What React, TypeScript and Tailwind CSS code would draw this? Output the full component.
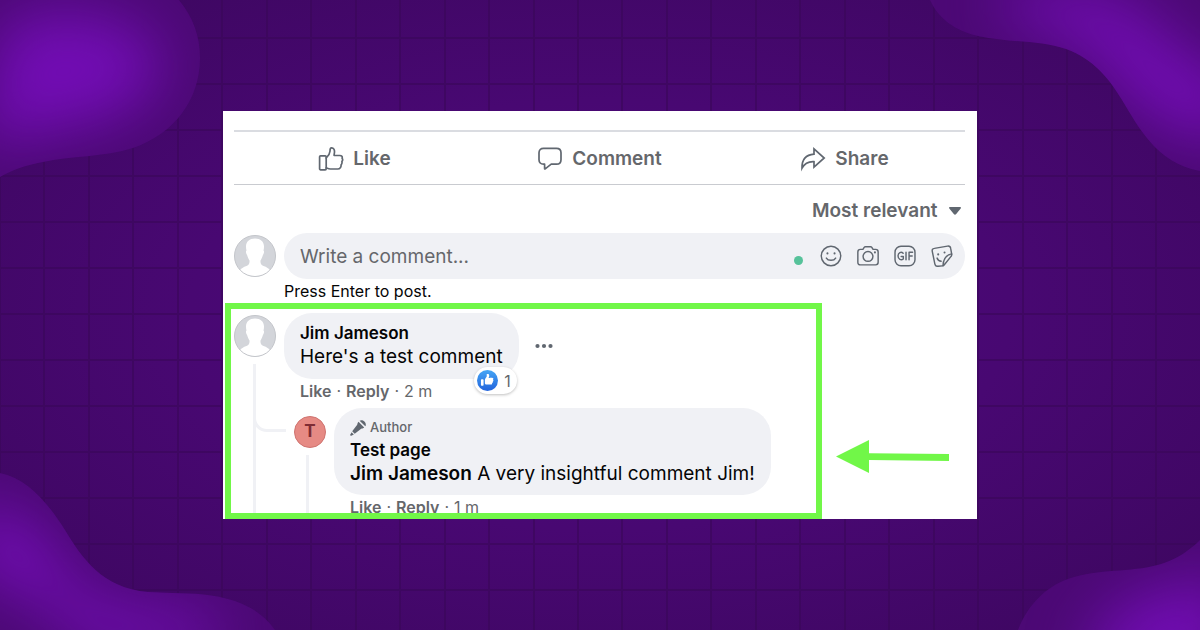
import type { ReactNode } from "react";

function Backdrop() {
  const columns = Array.from({ length: 27 }, (_, i) => Math.round(i * 44.46));
  const rows = Array.from({ length: 13 }, (_, i) => 38 + i * 46);
  const blobs = [
    "M179 0C193 17 200 36 200 58C200 100 174 134 133 148C105 157 70 156 43 162C26 165 12 170 0 177V0Z",
    "M930 0C938 18 955 31 978 36C1010 43 1040 40 1066 49C1094 59 1110 80 1122 100C1138 126 1156 163 1200 171V0Z",
    "M0 473C28 479 48 503 65 530C82 558 102 588 148 592C180 594 205 591 235 601C252 607 265 616 275 630H0Z",
    "M1018 630C1028 604 1048 584 1074 577C1105 568 1135 573 1164 563C1178 558 1190 550 1200 540V630Z",
  ];
  return (
    <svg
      aria-hidden="true"
      className="absolute inset-0 h-full w-full"
      viewBox="0 0 1200 630"
      preserveAspectRatio="none"
    >
      <defs>
        <radialGradient id="base" cx="0.5" cy="0.5" r="0.62">
          <stop offset="0" stopColor="#4e0880" />
          <stop offset="0.55" stopColor="#480872" />
          <stop offset="1" stopColor="#3f0763" />
        </radialGradient>
        <filter id="soft" x="-50%" y="-50%" width="200%" height="200%" colorInterpolationFilters="sRGB">
          <feGaussianBlur stdDeviation="30" />
        </filter>
        <clipPath id="blobs">
          {blobs.map((d) => (
            <path key={d} d={d} />
          ))}
        </clipPath>
      </defs>
      <rect width="1200" height="630" fill="url(#base)" />
      <g stroke="#3a0759" strokeWidth="2" opacity="0.6">
        {columns.map((x) => (
          <path key={x} d={`M${x} 0V630`} />
        ))}
        {rows.map((y) => (
          <path key={y} d={`M0 ${y}H1200`} />
        ))}
      </g>
      <g clipPath="url(#blobs)">
        <rect width="1200" height="630" fill="#4c0975" />
        <g filter="url(#soft)" fill="#720db4">
          <path d="M0 28C40 0 140 10 160 55C175 100 100 128 40 132L-20 150Z" />
          <path d="M1000 -10L1100 -10L1150 20L1190 60L1240 80V140C1170 140 1140 110 1114 80C1095 40 1050 34 1000 14Z" />
          <path d="M-30 500C30 510 60 550 78 590C115 610 170 606 220 620V650H90L40 600L-30 570Z" />
          <path d="M1090 660C1100 595 1150 595 1230 575V680H1090Z" />
        </g>
      </g>
    </svg>
  );
}

function Avatar() {
  return (
    <svg viewBox="0 0 42 42" className="size-[42px] shrink-0" role="img" aria-label="Profile picture">
      <circle cx="21" cy="21" r="20.5" fill="#d3d5da" />
      <path
        d="M21 3.5C15.500 3.500 12 6.500 12 11.500C12 13 12.200 14.500 12.500 15.500C11.600 15.700 11.900 18.500 13 19.800C13.500 22 14.500 24 15.500 25.500C15.700 28.500 15 30 12.500 31C9.500 32 7 33.500 5.800 35.500C9.500 39.500 15.500 41.200 21 41.200C26.500 41.200 32.500 39.500 36.200 35.500C35 33.500 32.500 32 29.500 31C27 30 26.300 28.500 26.500 25.500C27.500 24 28.500 22 29 19.800C30.100 18.500 30.400 15.700 29.500 15.500C29.800 14.500 30 13 30 11.500C30 6.500 26.500 3.500 21 3.500Z"
        fill="#fff"
      />
      <circle cx="21" cy="21" r="20.5" fill="none" stroke="#c3c5ca" />
    </svg>
  );
}

function LineIcon({ children, className = "size-[26px]" }: { children: ReactNode; className?: string }) {
  return (
    <svg
      viewBox="0 0 26 26"
      className={className}
      fill="none"
      stroke="#606770"
      strokeWidth="1.7"
      strokeLinejoin="round"
      strokeLinecap="round"
      aria-hidden="true"
    >
      {children}
    </svg>
  );
}

const actions = [
  {
    label: "Like",
    icon: (
      <>
        <rect x="1.600" y="9.800" width="6.600" height="14" rx="1" />
        <path d="M8.200 12C9.800 10.500 11.800 8 12 5.200C12 3.800 11.900 2 13.500 1.900C15.800 1.800 16.600 4 16.500 6C16.400 7.500 16 8.700 16.100 9.500H21.800C23.800 9.500 24.600 10.700 24.100 12.200C24.800 13.200 24.700 14.600 23.900 15.500C24.200 16.800 24 18 23.100 18.900C23.200 21.200 22 23 19.800 23H12.500C10.800 23 9.500 22.400 8.200 21.900" />
      </>
    ),
  },
  {
    label: "Comment",
    icon: (
      <path d="M6.500 2.300H19.500C22.300 2.300 24 4 24 6.800V13.700C24 16.500 22.300 18.200 19.500 18.200H14.200L8.200 22.800C7.800 23.100 7.600 22.900 7.600 22.500V18.200H6.500C3.700 18.200 2 16.500 2 13.700V6.800C2 4 3.700 2.300 6.500 2.300Z" />
    ),
  },
  {
    label: "Share",
    icon: (
      <path
        strokeLinejoin="miter"
        d="M14 2.800L24.200 12L14 21.200V15.700C8.800 15.400 4.800 17 2 22.200C1.800 14.500 5.500 8.800 14 8.200Z"
      />
    ),
  },
];

const composerTools = [
  {
    label: "Insert an emoji",
    icon: (
      <>
        <circle cx="13" cy="13" r="11.500" />
        <path d="M7.500 15.500C9.500 19 16.500 19 18.500 15.500" />
        <path d="M8.800 9.800V10M17.200 9.800V10" strokeWidth="2.400" />
      </>
    ),
  },
  {
    label: "Attach a photo",
    icon: (
      <>
        <path d="M4 5.200H7L8.500 2.800C8.800 2.300 9.300 2 10 2H16C16.700 2 17.200 2.300 17.500 2.800L19 5.200H22C24 5.200 25 6.200 25 8.200V20.500C25 22.500 24 23.500 22 23.500H4C2 23.500 1 22.500 1 20.500V8.200C1 6.200 2 5.200 4 5.200Z" />
        <circle cx="13" cy="13.500" r="5.800" />
        <path d="M21.200 8.700V8.800" strokeWidth="2.400" />
      </>
    ),
  },
  {
    label: "Comment with a GIF",
    icon: (
      <>
        <rect x="1.200" y="1.500" width="23.600" height="23" rx="7" />
        <path d="M10.800 9.800C8.500 7.500 4.800 9 4.800 13C4.800 17 8.500 18.500 11 16.500V13.500H8.500M14.200 8.500V17.500M17.800 17.500V8.500H22M17.800 13H21.500" />
      </>
    ),
  },
  {
    label: "Comment with a sticker",
    icon: (
      <>
        <path d="M4 4L19.500 1.300C21.700 1 22.900 1.800 23.200 3.800L24.500 11C24.600 12 24.300 12.800 23.700 13.500L15.500 23.700C15 24.300 14.400 24.600 13.500 24.700L8 25.200C6 25.300 5 24.500 4.600 22.500L1.500 7.500C1.100 5.400 2 4.300 4 4Z" />
        <path d="M24.400 10.500C19.500 11.500 14.500 15 14.200 24.500" />
        <path d="M7.200 15.500C8.100 17.800 9.800 19 12 19.200" />
        <path d="M8.500 11V11.100M16 8.800V8.900" strokeWidth="2.400" />
      </>
    ),
  },
];

function CommentMeta({ age }: { age: string }) {
  return (
    <div className="flex h-6 items-center gap-[5px] px-4 text-base leading-6 text-[#65676b]">
      <button type="button" className="font-semibold">Like</button>
      <span>·</span>
      <button type="button" className="font-semibold">Reply</button>
      <span>·</span>
      <a href="#comment">{age}</a>
    </div>
  );
}

function ReactionBadge() {
  return (
    <button
      type="button"
      aria-label="1 like"
      className="absolute right-0.5 -bottom-[15px] flex h-[27px] items-center gap-1.5 rounded-full bg-white pr-1.5 pl-[3px] text-base text-[#65676b] shadow-[0_1px_3px_rgba(0,0,0,0.25)]"
    >
      <svg viewBox="0 0 16 16" className="size-[21px]" aria-hidden="true">
        <defs>
          <linearGradient id="thumb" x1="0" y1="0" x2="0" y2="1">
            <stop offset="0" stopColor="#45a5f5" />
            <stop offset="1" stopColor="#2264dc" />
          </linearGradient>
        </defs>
        <circle cx="8" cy="8" r="8" fill="url(#thumb)" />
        <path
          fill="#fff"
          d="M12.162 7.338c.176.123.338.245.338.674 0 .43-.229.604-.474.725.1.163.132.36.089.546-.077.344-.392.611-.672.690.121.194.159.385.015.620-.185.295-.346.407-1.058.407H7.500c-.988 0-1.500-.546-1.500-1V7.665c0-1.230 1.467-2.275 1.467-3.130L7.361 3.470c-.005-.065.008-.224.058-.270.080-.079.301-.200.635-.200.218 0 .363.041.534.123.581.277.732.978.732 1.542 0 .271-.414 1.083-.470 1.364 0 0 .867-.192 1.879-.199 1.061-.006 1.749.190 1.749.842 0 .261-.219.523-.316.666zM3.600 7h.800a.600.600 0 01.600.600v3.800a.600.600 0 01-.600.600h-.800a.600.600 0 01-.600-.600V7.600a.600.600 0 01.600-.600z"
        />
      </svg>
      1
    </button>
  );
}

function CommentThread() {
  return (
    <section
      aria-label="Comments"
      className="h-[216px] min-w-0 flex-1 overflow-hidden border-6 border-[#71f748] pt-1 pl-[3px]"
    >
      <article className="flex gap-2">
        <div className="flex shrink-0 flex-col gap-[7px] pt-0.5">
          <Avatar />
          <div className="ml-[19px] w-[3px] flex-1 bg-[#f0f1f5]" />
        </div>
        <div className="min-w-0 flex-1">
          <div className="flex items-center gap-4">
            <div className="relative rounded-[28px] bg-[#f0f1f5] px-4 pt-2 pb-2.5 leading-6">
              <h3 className="text-[17px] leading-6 font-semibold">Jim Jameson</h3>
              <p className="text-[19px] leading-6">Here&apos;s a test comment</p>
              <ReactionBadge />
            </div>
            <button type="button" aria-label="More options">
              <svg viewBox="0 0 18 6" className="h-1.5 w-[18px]" fill="#606770" aria-hidden="true">
                <circle cx="2.500" cy="3" r="2.100" />
                <circle cx="9" cy="3" r="2.100" />
                <circle cx="15.500" cy="3" r="2.100" />
              </svg>
            </button>
          </div>
          <CommentMeta age="2 m" />
          <article className="relative mt-[5px] flex gap-2 pl-2.5">
            <div className="absolute top-0 -left-[31px] h-6 w-[33px] rounded-bl-[14px] border-b-[3px] border-l-[3px] border-[#f0f1f5]" />
            <div className="flex w-8 shrink-0 flex-col gap-[7px] pt-2">
              <div className="flex size-8 items-center justify-center rounded-full border border-[#cf7470] bg-[#e68a84] text-[17px] font-bold text-[#7e2c34]">
                T
              </div>
              <div className="ml-3 w-[3px] flex-1 bg-[#f0f1f5]" />
            </div>
            <div>
              <div className="rounded-[28px] bg-[#f0f1f5] px-4 pt-2.5 pb-[9px]">
                <div className="flex h-5 items-center gap-1 text-[13px] font-medium text-[#65676b]">
                  <svg viewBox="0 0 16 16" className="size-4" fill="#606770" aria-hidden="true">
                    <path d="M9.600.8C10.800-.2 13 .1 14.400 1.500C15.900 3 16.200 5.100 15.300 6.300Z" />
                    <path d="M8.500 1.800L14.200 7.600C13.200 8.700 12 8.600 11.200 8.800L4.700 13.800L2.200 11.300L7.200 4.800C7.400 3.800 7.600 2.800 8.500 1.800Z" />
                    <path d="M1.600 12.200L3.800 14.400L1.300 15.800C.6 16.100-.1 15.400.2 14.700Z" />
                  </svg>
                  Author
                </div>
                <h3 className="text-[17px] leading-6 font-semibold">Test page</h3>
                <p className="text-[19px] leading-6">
                  <a href="#jim" className="font-semibold">Jim Jameson</a> A very insightful comment Jim!
                </p>
              </div>
              <CommentMeta age="1 m" />
            </div>
          </article>
        </div>
      </article>
    </section>
  );
}

export default function App() {
  return (
    <div className="relative flex min-h-screen items-center justify-center overflow-hidden bg-[#430769] font-['Inter','Liberation_Sans',sans-serif]">
      <Backdrop />
      <main className="relative w-full max-w-[754px] bg-white pt-[19px] text-[#050505]">
        <div className="mr-3 ml-[11px]">
          <div className="grid grid-cols-3 gap-1 border-t-2 border-b border-t-[#dadce1] border-b-[#c9cbd0]">
            {actions.map((action) => (
              <button
                key={action.label}
                type="button"
                className="flex h-[52px] items-center justify-center gap-[9px] pt-0.5 text-[19px] font-semibold text-[#65676b]"
              >
                <LineIcon>{action.icon}</LineIcon>
                {action.label}
              </button>
            ))}
          </div>

          <div className="relative flex h-12 items-center justify-end pt-1 pr-1">
            <select
              aria-label="Sort comments"
              className="appearance-none bg-transparent pr-[23px] text-[19px] font-semibold text-[#65676b] outline-none"
            >
              <option>Most relevant</option>
            </select>
            <svg
              viewBox="0 0 12 8"
              className="pointer-events-none absolute right-1 h-2 w-3"
              fill="#606770"
              aria-hidden="true"
            >
              <path d="M.8 0H11.200C12 0 12.200.8 11.700 1.400L7.200 7C6.500 7.900 5.500 7.900 4.800 7L.3 1.400C-.2.800 0 0 .8 0Z" />
            </svg>
          </div>

          <form className="flex gap-2" onSubmit={(event) => event.preventDefault()}>
            <div className="pt-0.5">
              <Avatar />
            </div>
            <div className="min-w-0 flex-1">
              <div className="flex h-[46px] items-center rounded-full bg-[#f0f1f5] pr-3 pl-4">
                <input
                  type="text"
                  aria-label="Write a comment"
                  placeholder="Write a comment..."
                  className="min-w-0 flex-1 bg-transparent pt-0.5 text-[19px] outline-none placeholder:text-[#65676b]"
                />
                <span className="mt-2 mr-[17px] size-[9px] rounded-full bg-[#56c29a]" />
                <div className="flex gap-[15px]">
                  {composerTools.map((tool) => (
                    <button key={tool.label} type="button" aria-label={tool.label}>
                      <LineIcon className="size-[22px]">{tool.icon}</LineIcon>
                    </button>
                  ))}
                </div>
              </div>
              <p className="text-base leading-6">Press Enter to post.</p>
            </div>
          </form>
        </div>

        <div className="flex pl-0.5">
          <CommentThread />
          <svg
            viewBox="0 0 113 34"
            className="mt-[137px] mr-7 ml-3.5 h-[34px] w-[113px] shrink-0"
            fill="#71f748"
            aria-hidden="true"
          >
            <path d="M0 16.500L33 0V13.300L113 14V21L33 20V33Z" />
          </svg>
        </div>
      </main>
    </div>
  );
}
